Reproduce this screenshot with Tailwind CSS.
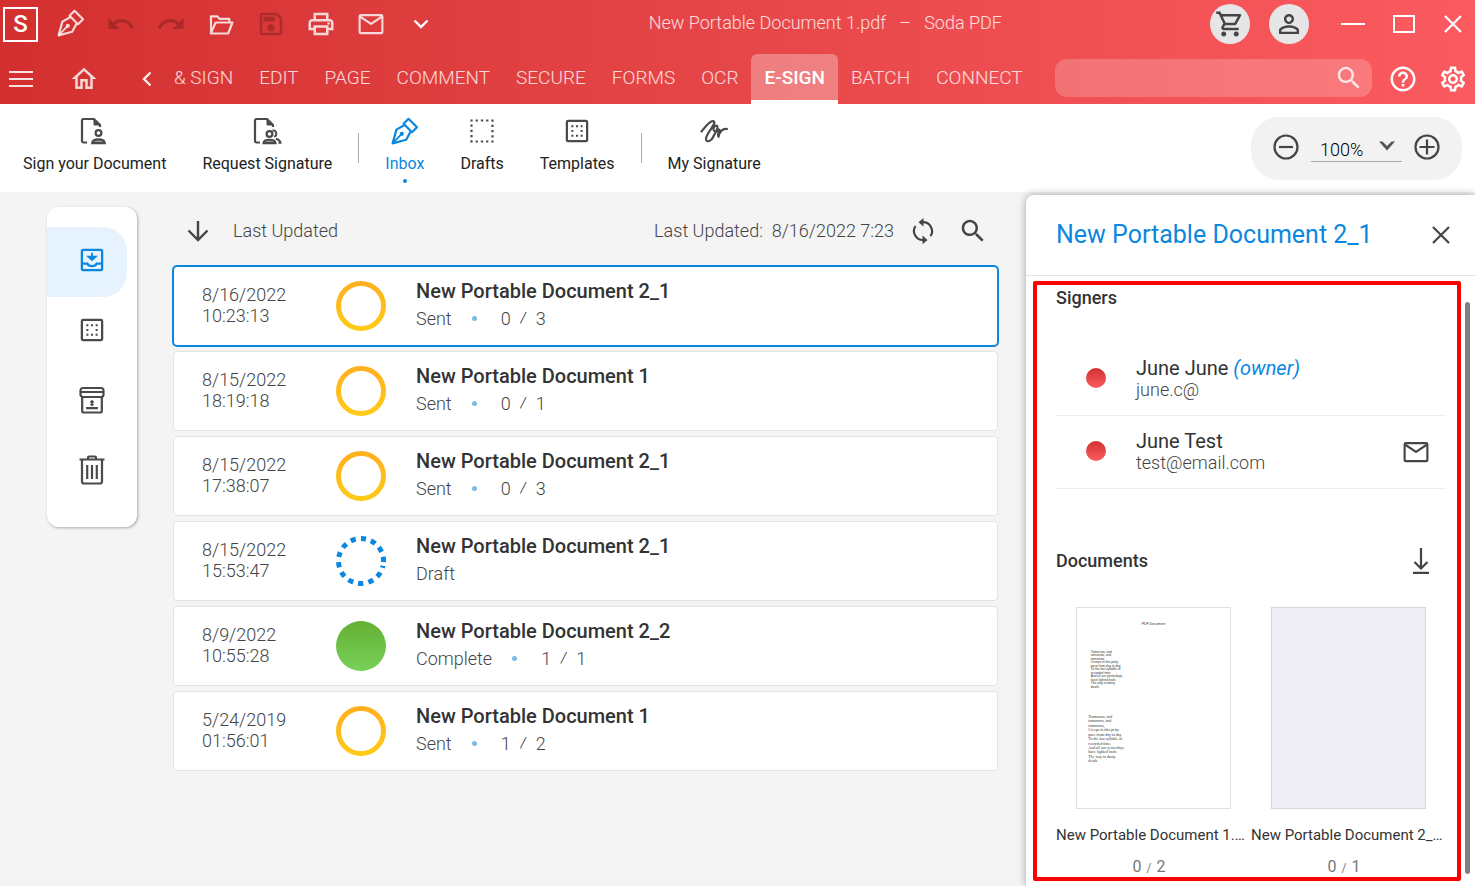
<!DOCTYPE html>
<html lang="en">

<head>
    <meta charset="UTF-8">
    <meta name="viewport" content="width=device-width, initial-scale=1.0">
    <script src="https://cdn.jsdelivr.net/npm/@tailwindcss/browser@4"></script>

    <title>Soda PDF</title>
</head>

<body class="min-h-screen flex flex-col bg-[#f4f4f4] text-[#333] font-['Roboto','Liberation_Sans',sans-serif]">

    <!-- shared icons -->
    <svg class="absolute size-0">
        <linearGradient id="amber" x1="0" y1="0" x2="0" y2="1">
            <stop offset="0" stop-color="#ffb01f" />
            <stop offset="1" stop-color="#ffca18" />
        </linearGradient>
        <symbol id="pen" viewBox="0 0 28 28">
            <g fill="none" stroke="currentColor" stroke-width="2.2" stroke-linejoin="round">
                <path d="M17.5 1.8 26 10.2l-5 5L12.6 6.8z" />
                <path d="M13.2 8.2 5.4 12.6 1.6 26.4l13.6-3.6 4.4-8.2" />
                <path d="M1.6 26.4 10.2 17.4" stroke-width="1.8" />
            </g>
            <circle cx="10.8" cy="16.8" r="2.1" fill="currentColor" />
        </symbol>
        <symbol id="undo" viewBox="0 0 24 24">
            <path fill="currentColor" d="M12.5 8c-2.65 0-5.05.99-6.9 2.6L2 7v9h9l-3.62-3.62c1.39-1.16 3.16-1.88 5.12-1.88 3.54 0 6.55 2.31 7.6 5.5l2.37-.78C21.08 11.03 17.15 8 12.5 8z" />
        </symbol>
        <symbol id="mail" viewBox="0 0 24 24">
            <g fill="none" stroke="currentColor" stroke-width="1.7" stroke-linejoin="round">
                <rect x="2.9" y="4.9" width="18.2" height="14.4" rx="1" />
                <path d="M3.4 6.2 12 11.9l8.6-5.7" />
            </g>
        </symbol>
        <symbol id="search" viewBox="0 0 24 24">
            <path fill="currentColor" d="M15.5 14h-.79l-.28-.27C15.41 12.59 16 11.11 16 9.5 16 5.91 13.09 3 9.5 3S3 5.91 3 9.5 5.91 16 9.5 16c1.61 0 3.09-.59 4.23-1.57l.27.28v.79l5 4.99L20.49 19l-4.99-5zm-6 0C7.01 14 5 11.99 5 9.5S7.01 5 9.5 5 14 7.01 14 9.5 11.99 14 9.5 14z" />
        </symbol>
        <symbol id="template" viewBox="0 0 24 24">
            <rect x="3.9" y="3.9" width="16.2" height="16.2" rx="1" fill="none" stroke="currentColor" stroke-width="1.8" />
            <path d="M7.500 8.200h9M7.500 12h1.600M14.900 12h1.600M7.500 15.800h9" fill="none" stroke="currentColor" stroke-width="1.600" stroke-dasharray="1.6 2.1" />
        </symbol>
        <symbol id="close" viewBox="0 0 18 18">
            <path d="M1 1l16 16M17 1 1 17" fill="none" stroke="currentColor" stroke-width="2.2" />
        </symbol>
        <symbol id="pending" viewBox="0 0 50 50">
            <circle cx="25" cy="25" r="22.5" fill="none" stroke="url(#amber)" stroke-width="5" />
        </symbol>
    </svg>

    <header class="bg-linear-to-r from-[#d32f2f] to-[#fb5b60] text-white">
        <div class="flex items-center h-12 pl-[3px] pr-[13px]">
            <div class="flex items-center justify-center size-[35px] border-2 border-white text-2xl font-medium">S</div>
            <div class="flex ml-2 text-white/80">
                <button class="flex justify-center w-[50px]" aria-label="E-sign"><svg class="size-7"><use href="#pen" /></svg></button>
                <button class="flex justify-center w-[50px] text-black/20" aria-label="Undo" disabled><svg class="size-[30px]"><use href="#undo" /></svg></button>
                <button class="flex justify-center w-[50px] text-black/20" aria-label="Redo" disabled><svg class="size-[30px] -scale-x-100"><use href="#undo" /></svg></button>
                <button class="flex justify-center w-[50px]" aria-label="Open">
                    <svg class="size-[30px]" viewBox="0 0 30 30" fill="none" stroke="currentColor" stroke-width="2.2" stroke-linejoin="round">
                        <path d="M5 24.5V7.3h6.5l2 2.6h9.8v3.6M4.8 24.5 9.6 13.5h16.8l-4.2 11z" />
                    </svg>
                </button>
                <button class="flex justify-center w-[50px] text-black/20" aria-label="Save" disabled>
                    <svg class="size-[30px]" viewBox="0 0 24 24" fill="currentColor">
                        <path d="M17 3H5c-1.11 0-2 .9-2 2v14c0 1.1.89 2 2 2h14c1.1 0 2-.9 2-2V7l-4-4zm2 16H5V5h11.17L19 7.83V19zm-7-7c-1.66 0-3 1.34-3 3s1.34 3 3 3 3-1.34 3-3-1.34-3-3-3zM6 6h9v4H6z" />
                    </svg>
                </button>
                <button class="flex justify-center w-[50px]" aria-label="Print">
                    <svg class="size-[30px]" viewBox="0 0 24 24" fill="currentColor">
                        <path d="M19 8h-1V3H6v5H5c-1.66 0-3 1.34-3 3v6h4v4h12v-4h4v-6c0-1.66-1.34-3-3-3zM8 5h8v3H8V5zm8 12v2H8v-4h8v2zm2-2v-2H6v2H4v-4c0-.55.45-1 1-1h14c.55 0 1 .45 1 1v4h-2z" />
                        <circle cx="18" cy="11.5" r="1" />
                    </svg>
                </button>
                <button class="flex justify-center w-[50px]" aria-label="Email"><svg class="size-[30px]"><use href="#mail" /></svg></button>
                <button class="flex justify-center items-center w-[50px] text-white" aria-label="More">
                    <svg class="w-4 h-[10px]" viewBox="0 0 16 10" fill="none" stroke="currentColor" stroke-width="2.4"><path d="M1.5 1.5 8 8l6.5-6.5" /></svg>
                </button>
            </div>
            <p class="ml-auto pb-[2px] text-lg font-light text-white/80 whitespace-pre">New Portable Document 1.pdf   –   Soda PDF</p>
            <div class="flex items-center ml-[208px]">
                <button class="flex items-center justify-center size-10 mr-[19px] rounded-full bg-[#e6e6e6] text-[#444]" aria-label="Cart">
                    <svg class="size-[30px]" viewBox="0 0 24 24" fill="currentColor">
                        <path d="M15.55 13c.75 0 1.41-.41 1.75-1.03l3.58-6.49c.37-.66-.11-1.48-.87-1.48H5.21l-.94-2H1v2h2l3.6 7.59-1.35 2.44C4.52 15.37 5.48 17 7 17h12v-2H7l1.1-2h7.45zM6.16 6h12.15l-2.76 5H8.53L6.16 6zM7 18c-1.1 0-1.99.9-1.99 2S5.9 22 7 22s2-.9 2-2-.9-2-2-2zm10 0c-1.1 0-1.99.9-1.99 2s.89 2 1.99 2 2-.9 2-2-.9-2-2-2z" />
                    </svg>
                </button>
                <button class="flex items-center justify-center size-10 mr-8 rounded-full bg-[#e6e6e6] text-[#444]" aria-label="Account">
                    <svg class="size-[30px]" viewBox="0 0 24 24" fill="currentColor">
                        <path d="M12 5.9c1.16 0 2.1.94 2.1 2.1s-.94 2.1-2.1 2.1S9.900 9.160 9.900 8s.94-2.100 2.100-2.100m0 9c2.970 0 6.100 1.460 6.100 2.100v1.100H5.900V17c0-.64 3.130-2.100 6.100-2.100M12 4C9.790 4 8 5.790 8 8s1.790 4 4 4 4-1.790 4-4-1.790-4-4-4zm0 9c-2.670 0-8 1.340-8 4v3h16v-3c0-2.660-5.330-4-8-4z" />
                    </svg>
                </button>
                <button class="flex items-center w-6 h-6 mr-7" aria-label="Minimize"><span class="w-full h-[2px] bg-white"></span></button>
                <button class="w-[22px] h-[18px] mr-[29px] border-2 border-white" aria-label="Maximize"></button>
                <button aria-label="Close"><svg class="size-[18px]"><use href="#close" /></svg></button>
            </div>
        </div>

        <div class="flex items-end h-14 pl-[9px] pr-[7px]">
            <button class="flex items-center h-[50px] w-[25px]" aria-label="Menu">
                <svg class="w-6 h-4" viewBox="0 0 24 16" stroke="#fff" stroke-opacity=".85" stroke-width="2"><path d="M0 1h24M0 8h24M0 15h24" /></svg>
            </button>
            <button class="flex items-center h-[50px] w-[30px] ml-[35px] text-white/80" aria-label="Home">
                <svg class="size-[30px]" viewBox="0 0 24 24" fill="currentColor"><path d="M12 5.69l5 4.500V18h-2v-6H9v6H7v-7.810l5-4.500M12 3L2 12h3v8h6v-6h2v6h6v-8h3L12 3z" /></svg>
            </button>
            <button class="flex items-center h-[50px] w-[10px] ml-[43px] mr-[9px]" aria-label="Scroll left">
                <svg class="w-[10px] h-4" viewBox="0 0 10 16" fill="none" stroke="#fff" stroke-opacity=".9" stroke-width="2.4"><path d="M8.500 1.500 2 8l6.500 6.500" /></svg>
            </button>
            <nav class="flex text-[19px] leading-[48px] font-light text-white/80 whitespace-nowrap">
                <a href="#" class="h-[50px] px-[13px]">&amp; SIGN</a>
                <a href="#" class="h-[50px] px-[13px]">EDIT</a>
                <a href="#" class="h-[50px] px-[13px]">PAGE</a>
                <a href="#" class="h-[50px] px-[13px]">COMMENT</a>
                <a href="#" class="h-[50px] px-[13px]">SECURE</a>
                <a href="#" class="h-[50px] px-[13px]">FORMS</a>
                <a href="#" class="h-[50px] px-[13px]">OCR</a>
                <a href="#" class="h-[50px] px-[13px] rounded-t-md bg-white/30 border-b-4 border-white text-white font-medium">E-SIGN</a>
                <a href="#" class="h-[50px] px-[13px]">BATCH</a>
                <a href="#" class="h-[50px] px-[13px]">CONNECT</a>
            </nav>
            <div class="flex flex-1 items-center h-[38px] mb-[7px] ml-[19px] pr-2 rounded-xl bg-white/20">
                <input type="text" aria-label="Search" class="flex-1 min-w-0 px-3 text-base outline-none">
                <svg class="size-[30px] text-white/80"><use href="#search" /></svg>
            </div>
            <button class="flex items-center h-[50px] ml-4" aria-label="Help">
                <svg class="size-[30px]" viewBox="0 0 24 24" fill="currentColor"><path d="M11 18h2v-2h-2v2zm1-16C6.480 2 2 6.480 2 12s4.480 10 10 10 10-4.480 10-10S17.520 2 12 2zm0 18c-4.410 0-8-3.590-8-8s3.590-8 8-8 8 3.590 8 8-3.590 8-8 8zm0-14c-2.210 0-4 1.790-4 4h2c0-1.100.9-2 2-2s2 .9 2 2c0 2-3 1.750-3 5h2c0-2.250 3-2.500 3-5 0-2.210-1.790-4-4-4z" /></svg>
            </button>
            <button class="flex items-center h-[50px] ml-5" aria-label="Settings">
                <svg class="size-[30px]" viewBox="0 0 24 24" fill="currentColor"><path d="M19.43 12.98c.04-.32.07-.64.07-.98 0-.34-.03-.66-.07-.98l2.11-1.65c.19-.15.24-.42.12-.64l-2-3.46c-.09-.16-.26-.25-.44-.25-.06 0-.12.01-.17.03l-2.49 1c-.52-.4-1.08-.73-1.69-.98l-.38-2.65C14.46 2.180 14.250 2 14 2h-4c-.25 0-.46.18-.49.42l-.38 2.650c-.61.25-1.17.59-1.69.98l-2.49-1c-.06-.02-.12-.03-.18-.03-.17 0-.34.09-.43.25l-2 3.460c-.13.22-.07.49.12.64l2.110 1.650c-.04.32-.07.65-.07.98 0 .33.03.66.07.98l-2.110 1.650c-.19.15-.24.42-.12.64l2 3.460c.09.16.26.25.44.25.06 0 .12-.01.17-.03l2.490-1c.52.4 1.080.73 1.690.98l.38 2.650c.03.24.24.42.49.42h4c.25 0 .46-.18.49-.42l.38-2.650c.61-.25 1.170-.59 1.690-.98l2.490 1c.06.02.12.03.18.03.17 0 .34-.09.43-.25l2-3.460c.12-.22.07-.49-.12-.64l-2.110-1.650zm-1.980-1.710c.04.31.05.52.05.73 0 .21-.02.43-.05.73l-.14 1.130.89.7 1.080.84-.7 1.210-1.270-.51-1.040-.42-.9.68c-.43.32-.84.56-1.250.73l-1.060.43-.16 1.130-.2 1.350h-1.400l-.19-1.350-.16-1.130-1.060-.43c-.43-.18-.83-.41-1.230-.71l-.91-.7-1.060.43-1.270.51-.7-1.210 1.080-.84.89-.7-.14-1.130c-.03-.31-.05-.54-.05-.74s.02-.43.05-.73l.14-1.130-.89-.7-1.080-.84.7-1.210 1.270.51 1.040.42.9-.68c.43-.32.84-.56 1.250-.73l1.060-.43.16-1.130.2-1.350h1.390l.19 1.350.16 1.130 1.060.43c.43.18.83.41 1.230.71l.91.7 1.060-.43 1.270-.51.7 1.210-1.070.85-.89.7.14 1.130zM12 8c-2.210 0-4 1.790-4 4s1.790 4 4 4 4-1.790 4-4-1.790-4-4-4zm0 6c-1.100 0-2-.9-2-2s.9-2 2-2 2 .9 2 2-.9 2-2 2z" /></svg>
            </button>
        </div>
    </header>

    <!-- e-sign toolbar -->
    <div class="flex items-start h-[88px] pl-[23px] pr-[13px] bg-white text-base text-[#222] whitespace-nowrap">
        <button class="flex flex-col items-center pt-3 gap-[6px]">
            <svg class="size-[30px] text-[#4a4a4a]" viewBox="3 0 30 30" fill="none" stroke="currentColor" stroke-width="2.2">
                <path d="M10 26.500H6.500a1.500 1.500 0 0 1-1.500-1.500V4.500A1.500 1.500 0 0 1 6.500 3H17l6 6v2" />
                <path d="M17 3v6h6z" fill="currentColor" stroke-width="1" />
                <circle cx="21.500" cy="17" r="2.900" />
                <path d="M15.200 27.200c.3-5 12.300-5 12.600 0z" fill="#999" />
            </svg>
            Sign your Document
        </button>
        <button class="flex flex-col items-center pt-3 gap-[6px] ml-9">
            <svg class="size-[30px] text-[#4a4a4a]" viewBox="0 0 30 30" fill="none" stroke="currentColor" stroke-width="2.200">
                <path d="M8 26.500H4.500A1.500 1.500 0 0 1 3 25V4.500A1.500 1.500 0 0 1 4.500 3H15l6 6v2" />
                <path d="M15 3v6h6z" fill="currentColor" stroke-width="1" />
                <path d="M20.500 14.500c4.500-1 5 6 1.500 6M24 22.800c2.500.8 4.200 2 4.500 4h-2" stroke-width="2" />
                <circle cx="17.500" cy="18" r="2.900" fill="#fff" />
                <path d="M11.500 27.200c.3-4.600 11.700-4.600 12 0z" fill="#999" />
            </svg>
            Request Signature
        </button>
        <span class="w-px h-[30px] mt-[29px] ml-[26px] bg-[#aaa]"></span>
        <button class="flex flex-col items-center pt-3 gap-[6px] ml-[26px] text-[#0c87df]">
            <span class="flex items-center justify-center size-[30px]"><svg class="size-7"><use href="#pen" /></svg></span>
            Inbox
            <span class="size-1 -mt-[3px] rounded-full bg-[#0c87df]"></span>
        </button>
        <button class="flex flex-col items-center pt-3 gap-[6px] ml-9">
            <svg class="size-[30px]" viewBox="0 0 30 30" fill="none" stroke="#4a4a4a" stroke-width="2.200">
                <rect x="4.500" y="4.500" width="21" height="21" stroke-dasharray="2.25 3" stroke-dashoffset="1.100" />
            </svg>
            Drafts
        </button>
        <button class="flex flex-col items-center pt-3 gap-[6px] ml-9">
            <svg class="size-[30px] text-[#4a4a4a]"><use href="#template" /></svg>
            Templates
        </button>
        <span class="w-px h-[30px] mt-[29px] ml-[26px] bg-[#aaa]"></span>
        <button class="flex flex-col items-center pt-3 gap-[6px] ml-[26px]">
            <svg class="size-[30px]" viewBox="0 0 30 30" fill="none" stroke="#4a4a4a" stroke-width="2.200" stroke-linecap="round">
                <path d="M2.500 15.500C6 11 11 4 14.500 5.200c4 2.300-8 12-7.500 18 .8 4 5.500 1.500 7-2 2-4.500 5.500-8 4.300-11-1.300-1.800-4.300.6-3.800 3.600.8 2.700 4.500 1.700 6.300-.8-1.300 3.500-2.800 6.500-1.300 7.500 1-4.500 4-8.500 8.500-7.500" />
            </svg>
            My Signature
        </button>

        <div class="flex items-center h-[63px] mt-[13px] ml-auto px-[22px] rounded-[28px] bg-[#f2f2f2]">
            <button aria-label="Zoom out">
                <svg class="size-[26px] -mt-[3px]" viewBox="0 0 26 26" fill="none" stroke="#444" stroke-width="2.200"><circle cx="13" cy="13" r="11.500" /><path d="M6 13h14" /></svg>
            </button>
            <div class="relative w-[91px] mx-3">
                <select aria-label="Zoom level" class="w-full h-7 pl-[9px] pt-1 appearance-none border-b border-[#aaa] text-lg leading-none font-light text-black">
                    <option>100%</option>
                </select>
                <svg class="absolute right-[7px] top-[7px] w-4 h-[10px]" viewBox="0 0 16 10" fill="#555"><path d="M0 .5h3.500L8 5 12.500.5H16L8 9.500z" /></svg>
            </div>
            <button aria-label="Zoom in">
                <svg class="size-[26px] -mt-[3px]" viewBox="0 0 26 26" fill="none" stroke="#444" stroke-width="2.200"><circle cx="13" cy="13" r="11.500" /><path d="M5.500 13h15M13 5.500v15" /></svg>
            </button>
        </div>
    </div>

    <main class="flex flex-1 items-start pl-[47px]">
        <!-- folders -->
        <aside class="w-[90px] mt-[15px] py-5 rounded-xl bg-white shadow-[1px_1px_3px_rgba(0,0,0,0.3)] text-[#4a4a4a]">
            <button class="flex items-center justify-center w-20 h-[70px] pb-1 pl-[10px] rounded-r-3xl bg-[#e6f3fe] text-[#0c87df]" aria-label="Inbox">
                <svg class="size-[30px]" viewBox="0 0 24 24" fill="none" stroke="currentColor" stroke-width="1.800">
                    <rect x="3.900" y="3.900" width="16.200" height="16.200" rx="1" />
                    <path d="M4 14.800h4.200c1.200 2.800 6.400 2.800 7.600 0H20" />
                    <path d="M12 6.200v3.500M9 9.200h6L12 12z" fill="currentColor" stroke-width="1.400" />
                </svg>
            </button>
            <button class="flex items-center justify-center w-full h-[70px] pb-1" aria-label="Templates"><svg class="size-[30px]"><use href="#template" /></svg></button>
            <button class="flex items-center justify-center w-full h-[70px] pb-1" aria-label="Archive">
                <svg class="size-[30px]" viewBox="0 0 30 30" fill="none" stroke="currentColor" stroke-width="2.200">
                    <rect x="3.500" y="3" width="23" height="9" rx="2.500" />
                    <path d="M3.500 7h23M5.200 12v14.500q0 1 1 1h17.600q1 0 1-1V12M9 23.200h12" />
                    <path d="M15 21v-5M13.300 17.500 15 15.800l1.700 1.700M13.300 19.500h3.400" stroke-width="1.600" />
                </svg>
            </button>
            <button class="flex items-center justify-center w-full h-[70px] pb-1" aria-label="Trash">
                <svg class="w-[26px] h-[30px]" viewBox="0 0 26 30" fill="none" stroke="currentColor" stroke-width="2.200">
                    <path d="M.5 4.500h25M9 4V2.500q0-1 1-1h6q1 0 1 1V4M3 5v21.500q0 2 2 2h16q2 0 2-2V5M8.200 10v14M13 10v14M17.800 10v14" />
                </svg>
            </button>
        </aside>

        <section class="flex-1 ml-9 mr-7 text-lg leading-[21px] font-light text-[#444]">
            <div class="flex items-center h-[74px] pt-1 pl-3 pr-[10px]">
                <button aria-label="Sort direction">
                    <svg class="w-6 h-[22px] ml-[1px]" viewBox="0 0 24 22" fill="none" stroke="#444" stroke-width="2.400"><path d="M12 1v18M2.500 10.500l9.500 9.500 9.500-9.500" /></svg>
                </button>
                <span class="ml-[23px] pb-[2px]">Last Updated</span>
                <span class="ml-auto pb-[2px]">Last Updated:&nbsp; 8/16/2022 7:23</span>
                <button class="ml-[14px] text-[#444]" aria-label="Refresh">
                    <svg class="size-[30px]" viewBox="0 0 30 30" fill="none" stroke="currentColor" stroke-width="2.200">
                        <path d="M15 6.200a9 9 0 0 1 7.500 14M15 24a9 9 0 0 1-7.500-14" />
                        <path d="M15.500 2v8.600l-5-4.300zM14.500 19.600v8.600l5-4.300z" fill="currentColor" stroke="none" />
                    </svg>
                </button>
                <button class="ml-5 text-[#444]" aria-label="Search documents"><svg class="size-[30px]"><use href="#search" /></svg></button>
            </div>

            <ul class="flex flex-col gap-[5px]">
                <li class="flex items-center h-20 pl-7 rounded-[4px] border border-[#0c87df] ring-1 ring-[#0c87df] bg-white">
                    <p class="w-[134px] pb-[2px]">8/16/2022<br>10:23:13</p>
                    <svg class="size-[50px] mr-[30px]"><use href="#pending" /></svg>
                    <div class="pb-1">
                        <h2 class="text-xl leading-7 font-medium text-[#333]">New Portable Document 2_1</h2>
                        <p class="flex items-center h-[26px]">Sent<span class="size-[5px] ml-5 mr-6 rounded-full bg-[#7dbbe0]"></span><span>0</span><span class="w-[25px] text-center text-sm italic text-black">/</span><span>3</span></p>
                    </div>
                </li>
                <li class="flex items-center h-20 pl-7 rounded-[4px] border border-[#e4e4e4] bg-white">
                    <p class="w-[134px] pb-[2px]">8/15/2022<br>18:19:18</p>
                    <svg class="size-[50px] mr-[30px]"><use href="#pending" /></svg>
                    <div class="pb-1">
                        <h2 class="text-xl leading-7 font-medium text-[#333]">New Portable Document 1</h2>
                        <p class="flex items-center h-[26px]">Sent<span class="size-[5px] ml-5 mr-6 rounded-full bg-[#7dbbe0]"></span><span>0</span><span class="w-[25px] text-center text-sm italic text-black">/</span><span>1</span></p>
                    </div>
                </li>
                <li class="flex items-center h-20 pl-7 rounded-[4px] border border-[#e4e4e4] bg-white">
                    <p class="w-[134px] pb-[2px]">8/15/2022<br>17:38:07</p>
                    <svg class="size-[50px] mr-[30px]"><use href="#pending" /></svg>
                    <div class="pb-1">
                        <h2 class="text-xl leading-7 font-medium text-[#333]">New Portable Document 2_1</h2>
                        <p class="flex items-center h-[26px]">Sent<span class="size-[5px] ml-5 mr-6 rounded-full bg-[#7dbbe0]"></span><span>0</span><span class="w-[25px] text-center text-sm italic text-black">/</span><span>3</span></p>
                    </div>
                </li>
                <li class="flex items-center h-20 pl-7 rounded-[4px] border border-[#e4e4e4] bg-white">
                    <p class="w-[134px] pb-[2px]">8/15/2022<br>15:53:47</p>
                    <svg class="size-[50px] mr-[30px]" viewBox="0 0 50 50"><circle cx="25" cy="25" r="22.500" fill="none" stroke="#0c87df" stroke-width="5" stroke-dasharray="5.2 5.15" stroke-dashoffset="3" transform="rotate(12 25 25)" /></svg>
                    <div class="pb-1">
                        <h2 class="text-xl leading-7 font-medium text-[#333]">New Portable Document 2_1</h2>
                        <p class="flex items-center h-[26px]">Draft</p>
                    </div>
                </li>
                <li class="flex items-center h-20 pl-7 rounded-[4px] border border-[#e4e4e4] bg-white">
                    <p class="w-[134px] pb-[2px]">8/9/2022<br>10:55:28</p>
                    <span class="size-[50px] mr-[30px] rounded-full bg-linear-to-b from-[#64b032] to-[#78d05a]"></span>
                    <div class="pb-1">
                        <h2 class="text-xl leading-7 font-medium text-[#333]">New Portable Document 2_2</h2>
                        <p class="flex items-center h-[26px]">Complete<span class="size-[5px] ml-5 mr-6 rounded-full bg-[#7dbbe0]"></span><span>1</span><span class="w-[25px] text-center text-sm italic text-black">/</span><span>1</span></p>
                    </div>
                </li>
                <li class="flex items-center h-20 pl-7 rounded-[4px] border border-[#e4e4e4] bg-white">
                    <p class="w-[134px] pb-[2px]">5/24/2019<br>01:56:01</p>
                    <svg class="size-[50px] mr-[30px]"><use href="#pending" /></svg>
                    <div class="pb-1">
                        <h2 class="text-xl leading-7 font-medium text-[#333]">New Portable Document 1</h2>
                        <p class="flex items-center h-[26px]">Sent<span class="size-[5px] ml-5 mr-6 rounded-full bg-[#7dbbe0]"></span><span>1</span><span class="w-[25px] text-center text-sm italic text-black">/</span><span>2</span></p>
                    </div>
                </li>
            </ul>
        </section>

        <!-- document details -->
        <aside class="self-stretch flex flex-col w-[449px] mt-[3px] rounded-tl-lg bg-white shadow-[0_0_8px_rgba(0,0,0,0.35)]">
            <div class="flex items-center justify-between h-[81px] pl-[30px] pr-[25px] border-b border-[#e4e4e4]">
                <h1 class="text-[25px] text-[#0c87df]">New Portable Document 2_1</h1>
                <button class="text-[#444]" aria-label="Close panel"><svg class="size-[18px]"><use href="#close" /></svg></button>
            </div>

            <div class="relative flex-1 pl-[30px] pr-[29px] pt-2">
                <div class="absolute top-[5px] bottom-[5px] left-[7px] right-[14px] border-4 border-[#ff0000] rounded-[2px]"></div>
                <div class="absolute top-[26px] bottom-3 right-[5px] w-[5px] rounded-full bg-[#808080]"></div>

                <h2 class="text-lg leading-7 font-medium">Signers</h2>
                <ul class="mt-[31px]">
                    <li class="flex items-center h-[73px] pl-[30px] pr-4 border-b border-[#eee]">
                        <span class="size-5 mb-[2px] rounded-full bg-linear-to-b from-[#d32f2f] to-[#fb5b60]"></span>
                        <div class="ml-[30px]">
                            <p class="text-xl leading-[22px]">June June <i class="text-[#0c87df]">(owner)</i></p>
                            <p class="text-lg leading-[22px] font-light text-[#444]">june.c@</p>
                        </div>
                    </li>
                    <li class="flex items-center h-[73px] pl-[30px] pr-[15px] border-b border-[#eee]">
                        <span class="size-5 mb-[2px] rounded-full bg-linear-to-b from-[#d32f2f] to-[#fb5b60]"></span>
                        <div class="ml-[30px]">
                            <p class="text-xl leading-[22px]">June Test</p>
                            <p class="text-lg leading-[22px] font-light text-[#444]">test@email.com</p>
                        </div>
                        <button class="ml-auto text-[#444]" aria-label="Send reminder"><svg class="size-[30px]"><use href="#mail" /></svg></button>
                    </li>
                </ul>

                <div class="flex items-center justify-between mt-[58px] pr-[17px]">
                    <h2 class="text-lg leading-7 font-medium">Documents</h2>
                    <button aria-label="Download">
                        <svg class="w-4 h-[26px]" viewBox="0 0 16 26" fill="none" stroke="#444" stroke-width="2.200"><path d="M8 0v20M1.500 14 8 20.500 14.500 14M0 24.800h16" /></svg>
                    </button>
                </div>

                <ul class="flex mt-8">
                    <li class="w-[195px]">
                        <svg class="mx-auto w-[155px] h-[202px] border border-[#e0e0e0] bg-white" viewBox="0 0 620 808" fill="#333" font-family="Liberation Sans">
                            <text x="310" y="66" font-size="14" text-anchor="middle">PDF Document</text>
                            <g font-size="13">
                                <text x="56" y="181">Tomorrow, and</text>
                                <text x="56" y="195">tomorrow, and</text>
                                <text x="56" y="209">tomorrow,</text>
                                <text x="56" y="223">Creeps in this petty</text>
                                <text x="56" y="237">pace from day to day</text>
                                <text x="56" y="251">To the last syllable of</text>
                                <text x="56" y="265">recorded time;</text>
                                <text x="56" y="279">And all our yesterdays</text>
                                <text x="56" y="293">have lighted fools</text>
                                <text x="56" y="307">The way to dusty</text>
                                <text x="56" y="321">death.</text>
                            </g>
                            <g font-size="16" font-family="Liberation Serif">
                                <text x="46" y="444">Tomorrow, and</text>
                                <text x="46" y="462">tomorrow, and</text>
                                <text x="46" y="480">tomorrow,</text>
                                <text x="46" y="498">Creeps in this petty</text>
                                <text x="46" y="516">pace from day to day</text>
                                <text x="46" y="534">To the last syllable of</text>
                                <text x="46" y="552">recorded time;</text>
                                <text x="46" y="570">And all our yesterdays</text>
                                <text x="46" y="588">have lighted fools</text>
                                <text x="46" y="606">The way to dusty</text>
                                <text x="46" y="624">death.</text>
                            </g>
                        </svg>
                        <p class="mt-4 whitespace-nowrap text-[15px] leading-5">New Portable Document 1.…</p>
                        <p class="w-[186px] mt-3 text-center text-base leading-5 text-[#777]">0 <span class="mx-px text-xs">/</span> 2</p>
                    </li>
                    <li class="w-[195px]">
                        <div class="mx-auto w-[155px] h-[202px] border border-[#d6d6dc] bg-[#efeef5]"></div>
                        <p class="mt-4 whitespace-nowrap text-[15px] leading-5">New Portable Document 2_…</p>
                        <p class="w-[186px] mt-3 text-center text-base leading-5 text-[#777]">0 <span class="mx-px text-xs">/</span> 1</p>
                    </li>
                </ul>
            </div>
        </aside>
    </main>
</body>

</html>
